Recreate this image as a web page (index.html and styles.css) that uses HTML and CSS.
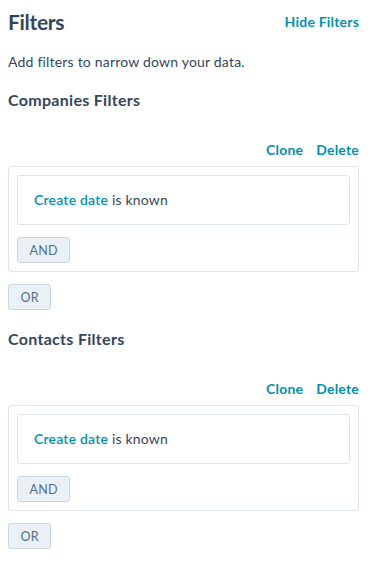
FILE: index.html
```html
<!DOCTYPE html>
<html lang="en">
<head>
  <meta charset="UTF-8" />
  <title>Filters</title>
  <link rel="stylesheet" href="styles.css">
</head>
<body>

  <div class="panel">
    <div class="panel-header">
      <h1 class="panel-title">Filters</h1>
      <a class="link hide-link" href="#">Hide Filters</a>
    </div>
    <p class="panel-desc">Add filters to narrow down your data.</p>

    <div class="filter-section">
      <h2 class="section-title">Companies Filters</h2>
      <div class="group-actions">
        <a class="link" href="#">Clone</a>
        <a class="link" href="#">Delete</a>
      </div>
      <div class="filter-group">
        <div class="filter-item">
          <span class="filter-prop">Create date</span> is known
        </div>
        <button class="logic-button">AND</button>
      </div>
      <button class="logic-button">OR</button>
    </div>

    <div class="filter-section">
      <h2 class="section-title">Contacts Filters</h2>
      <div class="group-actions">
        <a class="link" href="#">Clone</a>
        <a class="link" href="#">Delete</a>
      </div>
      <div class="filter-group">
        <div class="filter-item">
          <span class="filter-prop">Create date</span> is known
        </div>
        <button class="logic-button">AND</button>
      </div>
      <button class="logic-button">OR</button>
    </div>
  </div>

</body>
</html>
```

FILE: styles.css
```css
body {
  margin: 0;
  padding: 0;
  background: #ffffff;
  color: #33475b;
  font-family: Lato, "Open Sans", sans-serif;
  font-size: 14px;
  letter-spacing: 0.2px;
}

.panel {
  padding: 7px 13px 0 8px;
}

.panel-header {
  display: flex;
  justify-content: space-between;
  align-items: center;
}

.panel-title {
  margin: 0;
  font-size: 21px;
  line-height: 30px;
  font-weight: 700;
  letter-spacing: -0.3px;
}

.link {
  color: #0091ae;
  font-weight: 700;
  text-decoration: none;
  line-height: 20px;
}

.panel-desc {
  margin: 15px 0 0;
  line-height: 20px;
}

.filter-section {
  margin-top: 17px;
}

.filter-section + .filter-section {
  margin-top: 18px;
}

.section-title {
  margin: 0;
  font-size: 16px;
  line-height: 22px;
  font-weight: 700;
  letter-spacing: 0.3px;
}

.group-actions {
  display: flex;
  justify-content: flex-end;
  gap: 13px;
  margin: 29px 0 6px;
}

.filter-group {
  border: 1px solid #dfe3eb;
  border-radius: 3px;
  padding: 8px;
}

.filter-item {
  border: 1px solid #dfe3eb;
  border-radius: 3px;
  padding: 14px 16px;
  line-height: 20px;
}

.filter-prop {
  color: #0091ae;
  font-weight: 600;
}

.logic-button {
  display: block;
  box-sizing: border-box;
  height: 26px;
  margin-top: 12px;
  padding: 0 11.5px;
  background: #eaf0f6;
  border: 1px solid #cbd6e2;
  border-radius: 3px;
  color: #516f90;
  font-family: Lato, "Open Sans", sans-serif;
  font-size: 12.5px;
  letter-spacing: 0.2px;
  cursor: pointer;
}
```
